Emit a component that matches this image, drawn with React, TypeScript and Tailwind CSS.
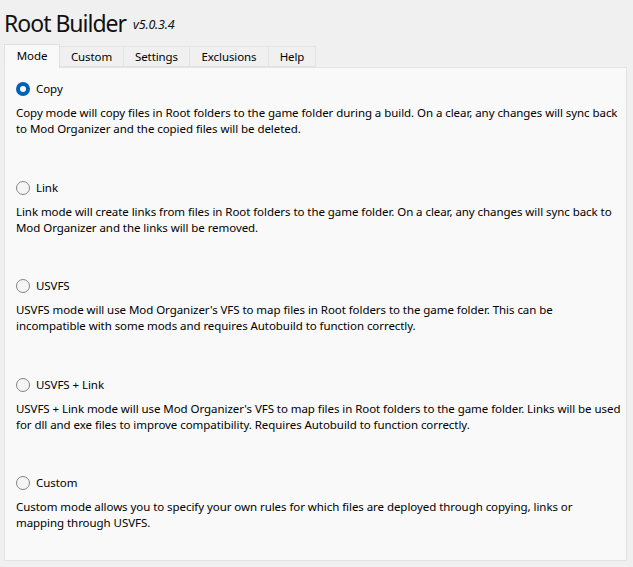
import React from "react";

const modes = [
  {
    name: "Copy",
    checked: true,
    lines: [
      "Copy mode will copy files in Root folders to the game folder during a build. On a clear, any changes will sync back",
      "to Mod Organizer and the copied files will be deleted.",
    ],
  },
  {
    name: "Link",
    checked: false,
    lines: [
      "Link mode will create links from files in Root folders to the game folder. On a clear, any changes will sync back to",
      "Mod Organizer and the links will be removed.",
    ],
  },
  {
    name: "USVFS",
    checked: false,
    lines: [
      "USVFS mode will use Mod Organizer's VFS to map files in Root folders to the game folder. This can be",
      "incompatible with some mods and requires Autobuild to function correctly.",
    ],
  },
  {
    name: "USVFS + Link",
    checked: false,
    lines: [
      "USVFS + Link mode will use Mod Organizer's VFS to map files in Root folders to the game folder. Links will be used",
      "for dll and exe files to improve compatibility. Requires Autobuild to function correctly.",
    ],
  },
  {
    name: "Custom",
    checked: false,
    lines: [
      "Custom mode allows you to specify your own rules for which files are deployed through copying, links or",
      "mapping through USVFS.",
    ],
  },
];

const tabs = [
  { label: "Mode", w: "w-[56px]" },
  { label: "Custom", w: "w-[64px]" },
  { label: "Settings", w: "w-[66px]" },
  { label: "Exclusions", w: "w-[79px]" },
  { label: "Help", w: "w-[47px]" },
];

function Radio({ checked }: { checked: boolean }) {
  if (checked) {
    return (
      <span className="w-[14px] h-[14px] rounded-full bg-[#005fb8] flex items-center justify-center">
        <span className="w-[6px] h-[6px] rounded-full bg-white" />
      </span>
    );
  }
  return <span className="w-[14px] h-[14px] rounded-full border border-[#858585] bg-[#f5f5f5]" />;
}

export default function App() {
  return (
    <div
      className="w-[633px] h-[567px] bg-[#f0f0f0] text-[#000] flex flex-col"
      style={{ fontFamily: '"Noto Sans", "Open Sans", sans-serif' }}
    >
      <div className="h-[44px] flex items-end pl-[4px] pb-[6px]">
        <span className="text-[23px] leading-[30px] tracking-[-1px] text-[#111]">Root Builder</span>
        <span className="text-[12.5px] italic ml-[7px] mb-[3px] tracking-[-0.2px] text-[#111]">v5.0.3.4</span>
      </div>
      <div className="flex pl-[4px] h-[23px] items-end relative z-10 text-[11.5px] tracking-[-0.1px]">
        {tabs.map((t, i) => (
          <div
            key={t.label}
            className={
              i === 0
                ? `${t.w} h-[24px] bg-[#f9f9f9] border border-b-0 border-[#e0e0e0] flex items-center justify-center -mb-px pb-[1px]`
                : `${t.w} h-[21px] bg-[#f0f0f0] border border-l-0 border-[#e3e3e3] flex items-center justify-center pt-[1px]`
            }
          >
            {t.label}
          </div>
        ))}
      </div>
      <div className="ml-[4px] w-[623px] h-[494px] bg-[#f9f9f9] border border-[#e3e3e3] pt-[13px] pl-[11px] pr-[4px] text-[11.5px] tracking-[-0.06px]">
        {modes.map((m) => (
          <div key={m.name} className="h-[98.5px]">
            <div className="h-[16px] flex items-center gap-[6px]">
              <Radio checked={m.checked} />
              <span className="leading-[16px]">{m.name}</span>
            </div>
            <div className="mt-[8px] leading-[16px] flex flex-col">
              {m.lines.map((l, i) => (
                <span key={i} className="whitespace-nowrap">
                  {l}
                </span>
              ))}
            </div>
          </div>
        ))}
      </div>
    </div>
  );
}
